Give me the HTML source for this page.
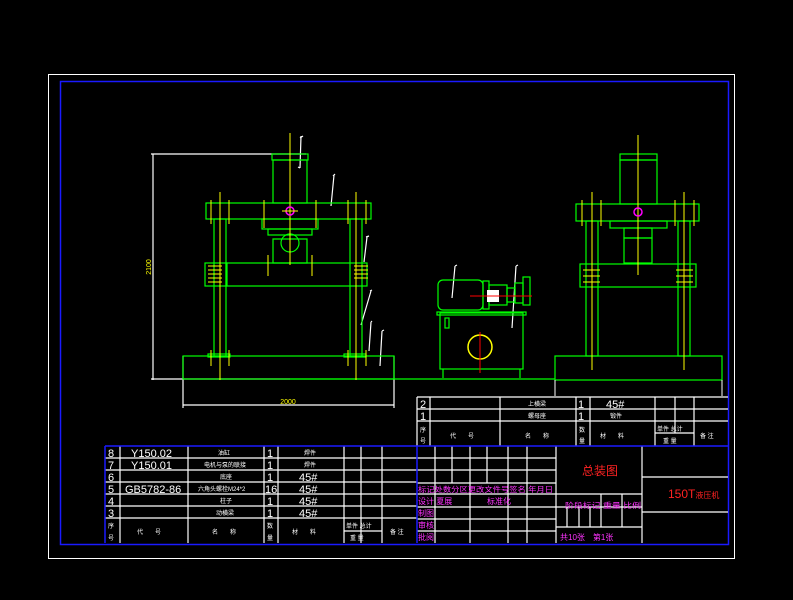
<!DOCTYPE html>
<html><head><meta charset="utf-8"><style>
html,body{margin:0;padding:0;background:#000;width:793px;height:600px;overflow:hidden}
svg{display:block}
text{font-family:"Liberation Sans","Noto Sans CJK SC",sans-serif}
</style></head><body>
<svg width="793" height="600" viewBox="0 0 793 600" xmlns="http://www.w3.org/2000/svg">
<rect x="0" y="0" width="793" height="600" fill="#000"/>
<rect x="48.5" y="74.5" width="686" height="484" fill="none" stroke="#fff"/>
<rect x="60.5" y="81.5" width="668" height="463" fill="none" stroke="#1a1aff" stroke-width="1.5"/>

<!-- LEFT VIEW -->
<g fill="none" stroke="#fff" stroke-width="1.2">
<line x1="153" y1="154" x2="153" y2="380"/>
<line x1="151" y1="154" x2="306" y2="154"/>
<line x1="151" y1="379" x2="290" y2="379"/>
<line x1="183" y1="356" x2="183" y2="408"/>
<line x1="394" y1="356" x2="394" y2="408"/>
<line x1="183" y1="405" x2="394" y2="405"/>
<path d="M300 138 L303 136 M301 136 L300 168 M300 168 L298 167"/>
<path d="M333 176 L335 174 M334 175 L331 206"/>
<path d="M366 237 L369 236 M367 237 L364 262"/>
<path d="M370 291 L372 290 M371 291 L361 325"/>
<path d="M371 322 L372 321 M371 322 L369 351"/>
<path d="M382 331 L384 330 M382 331 L380 366"/>
<path d="M455 266 L457 265 M455 266 L452 298"/>
<path d="M516 266 L518 265 M516 266 L512 328"/>
</g>
<text x="0" y="0" transform="translate(151,267) rotate(-90)" fill="#ff0" font-size="7" text-anchor="middle">2100</text>
<text x="288" y="404" fill="#ff0" font-size="7" text-anchor="middle">2000</text>

<g fill="none" stroke="#00ff00" stroke-width="1.2">
<rect x="272" y="154" width="36" height="6"/>
<rect x="273" y="160" width="34" height="43"/>
<rect x="206" y="203" width="165" height="16"/>
<rect x="262" y="219" width="56" height="10"/>
<rect x="268" y="229" width="44" height="6"/>
<path d="M273 239 h34 v24 h-34 z"/>
<circle cx="290" cy="243" r="9"/>
<rect x="214" y="219" width="12" height="137"/>
<rect x="350" y="219" width="12" height="137"/>
<rect x="226" y="263" width="141" height="23"/>
<rect x="205" y="263" width="22" height="23"/>
<rect x="183" y="356" width="211" height="23"/>
<rect x="208" y="354" width="22" height="3"/>
<rect x="344" y="354" width="22" height="3"/>
<line x1="290" y1="379" x2="555" y2="379"/>
</g>
<g stroke="#ff0" stroke-width="1">
<line x1="290" y1="133" x2="290" y2="265"/>
<line x1="220" y1="192" x2="220" y2="380"/>
<line x1="356" y1="192" x2="356" y2="380"/>
<line x1="211" y1="200" x2="211" y2="224"/>
<line x1="229" y1="200" x2="229" y2="224"/>
<line x1="264" y1="200" x2="264" y2="228"/>
<line x1="316" y1="200" x2="316" y2="228"/>
<line x1="348" y1="200" x2="348" y2="224"/>
<line x1="366" y1="200" x2="366" y2="224"/>
<line x1="268" y1="255" x2="268" y2="276"/>
<line x1="312" y1="255" x2="312" y2="276"/>
<line x1="208" y1="266" x2="222" y2="266"/><line x1="208" y1="270" x2="222" y2="270"/><line x1="208" y1="274" x2="222" y2="274"/><line x1="208" y1="278" x2="222" y2="278"/><line x1="208" y1="282" x2="222" y2="282"/>
<line x1="354" y1="266" x2="368" y2="266"/><line x1="354" y1="270" x2="368" y2="270"/><line x1="354" y1="274" x2="368" y2="274"/><line x1="354" y1="278" x2="368" y2="278"/>
<line x1="211" y1="350" x2="211" y2="366"/><line x1="229" y1="350" x2="229" y2="366"/>
<line x1="348" y1="350" x2="348" y2="366"/><line x1="366" y1="350" x2="366" y2="366"/>
</g>
<circle cx="290" cy="211" r="4" fill="none" stroke="#f0f" stroke-width="1.5"/>
<line x1="282" y1="211" x2="298" y2="211" stroke="#ff0"/>

<!-- MIDDLE: pump unit -->
<g fill="none" stroke="#00ff00" stroke-width="1.2">
<rect x="438" y="280" width="45" height="30" rx="5"/>
<rect x="483" y="281" width="6" height="28"/>
<rect x="489" y="285" width="18" height="20"/>
<rect x="507" y="288" width="8" height="14"/>
<rect x="515" y="283" width="8" height="20"/>
<rect x="523" y="277" width="7" height="28"/>
<rect x="440" y="313" width="83" height="56"/>
<rect x="437" y="312" width="89" height="3"/>
<rect x="445" y="318" width="4" height="10"/>
<line x1="443" y1="369" x2="443" y2="378"/><line x1="520" y1="369" x2="520" y2="378"/>
</g>
<rect x="487" y="290" width="12" height="12" fill="#fff"/>
<circle cx="480" cy="347" r="12" fill="none" stroke="#ff0" stroke-width="1.5"/>
<line x1="480" y1="332" x2="480" y2="373" stroke="#f00"/>
<line x1="470" y1="296" x2="532" y2="296" stroke="#f00"/>

<!-- RIGHT VIEW -->
<g fill="none" stroke="#00ff00" stroke-width="1.2">
<rect x="620" y="154" width="37" height="6"/>
<rect x="620" y="160" width="37" height="44"/>
<rect x="576" y="204" width="123" height="17"/>
<rect x="610" y="221" width="57" height="7"/>
<rect x="624" y="228" width="28" height="10"/>
<rect x="624" y="238" width="28" height="25"/>
<rect x="586" y="221" width="12" height="135"/>
<rect x="678" y="221" width="12" height="135"/>
<rect x="580" y="264" width="116" height="23"/>
<rect x="555" y="356" width="167" height="24"/>
</g>
<g stroke="#ff0" stroke-width="1">
<line x1="638" y1="135" x2="638" y2="275"/>
<line x1="592" y1="192" x2="592" y2="370"/>
<line x1="684" y1="192" x2="684" y2="370"/>
<line x1="582" y1="200" x2="582" y2="226"/><line x1="601" y1="200" x2="601" y2="226"/>
<line x1="675" y1="200" x2="675" y2="226"/><line x1="694" y1="200" x2="694" y2="226"/>
<line x1="583" y1="270" x2="600" y2="270"/><line x1="583" y1="276" x2="600" y2="276"/><line x1="583" y1="282" x2="600" y2="282"/>
<line x1="676" y1="270" x2="693" y2="270"/><line x1="676" y1="276" x2="693" y2="276"/><line x1="676" y1="282" x2="693" y2="282"/>
</g>
<circle cx="638" cy="212" r="4" fill="none" stroke="#f0f" stroke-width="1.5"/>
<g stroke="#fff"><line x1="555" y1="380" x2="555" y2="396"/><line x1="722" y1="380" x2="722" y2="396"/></g>

<!-- TABLES -->
<g fill="none" stroke="#fff" stroke-width="1.2">
<line x1="417" y1="397" x2="728" y2="397"/>
<line x1="417" y1="409" x2="728" y2="409"/>
<line x1="417" y1="421" x2="728" y2="421"/>
<line x1="655" y1="433" x2="694" y2="433"/>
<line x1="417" y1="397" x2="417" y2="446"/>
<line x1="430" y1="397" x2="430" y2="446"/>
<line x1="500" y1="397" x2="500" y2="446"/>
<line x1="576" y1="397" x2="576" y2="446"/>
<line x1="590" y1="397" x2="590" y2="446"/>
<line x1="655" y1="397" x2="655" y2="446"/>
<line x1="675" y1="397" x2="675" y2="433"/>
<line x1="694" y1="397" x2="694" y2="446"/>
<line x1="105" y1="458" x2="417" y2="458"/>
<line x1="105" y1="470" x2="417" y2="470"/>
<line x1="105" y1="482" x2="417" y2="482"/>
<line x1="105" y1="494" x2="417" y2="494"/>
<line x1="105" y1="506" x2="417" y2="506"/>
<line x1="105" y1="518" x2="417" y2="518"/>
<line x1="344" y1="531" x2="382" y2="531"/>
<line x1="120" y1="446" x2="120" y2="543"/>
<line x1="188" y1="446" x2="188" y2="543"/>
<line x1="264" y1="446" x2="264" y2="543"/>
<line x1="278" y1="446" x2="278" y2="543"/>
<line x1="344" y1="446" x2="344" y2="543"/>
<line x1="361" y1="446" x2="361" y2="543"/>
<line x1="382" y1="446" x2="382" y2="543"/>
<line x1="417" y1="458" x2="556" y2="458"/>
<line x1="417" y1="470" x2="556" y2="470"/>
<line x1="417" y1="483" x2="556" y2="483"/>
<line x1="417" y1="494" x2="642" y2="494"/>
<line x1="417" y1="507" x2="556" y2="507"/>
<line x1="417" y1="519" x2="556" y2="519"/>
<line x1="417" y1="531" x2="556" y2="531"/>
<line x1="435" y1="446" x2="435" y2="543"/>
<line x1="452" y1="446" x2="452" y2="483"/>
<line x1="470" y1="446" x2="470" y2="543"/>
<line x1="487" y1="446" x2="487" y2="483"/>
<line x1="508" y1="446" x2="508" y2="543"/>
<line x1="527" y1="446" x2="527" y2="543"/>
<line x1="556" y1="446" x2="556" y2="543"/>
<line x1="642" y1="446" x2="642" y2="543"/>
<line x1="642" y1="477" x2="728" y2="477"/>
<line x1="642" y1="512" x2="728" y2="512"/>
<line x1="601" y1="494" x2="601" y2="527"/>
<line x1="622" y1="494" x2="622" y2="527"/>
<line x1="556" y1="507" x2="642" y2="507"/>
<line x1="556" y1="527" x2="642" y2="527"/>
<line x1="567" y1="507" x2="567" y2="527"/>
<line x1="579" y1="507" x2="579" y2="527"/>
<line x1="590" y1="507" x2="590" y2="527"/>
</g>
<g fill="none" stroke="#1a1aff" stroke-width="1.5">
<line x1="105" y1="446" x2="728" y2="446"/>
<line x1="105" y1="446" x2="105" y2="543"/>
<line x1="417" y1="446" x2="417" y2="543"/>
</g>

<g fill="#fff" font-size="11">
<text x="420" y="408">2</text><text x="420" y="420">1</text>
<text x="578" y="408">1</text><text x="578" y="420">1</text>
<text x="606" y="408">45#</text>
<text x="528" y="406" font-size="6">上横梁</text>
<text x="528" y="418" font-size="6">螺母座</text>
<text x="610" y="418" font-size="6">锻件</text>
<text x="420" y="432" font-size="6">序</text><text x="420" y="443" font-size="6">号</text>
<text x="450" y="438" font-size="6">代　　号</text>
<text x="525" y="438" font-size="6">名　　称</text>
<text x="579" y="432" font-size="6">数</text><text x="579" y="443" font-size="6">量</text>
<text x="600" y="438" font-size="6">材　　料</text>
<text x="657" y="431" font-size="6">单件 总计</text>
<text x="663" y="443" font-size="6">重 量</text>
<text x="700" y="438" font-size="6">备 注</text>

<text x="108" y="457">8</text><text x="108" y="469">7</text><text x="108" y="481">6</text>
<text x="108" y="493">5</text><text x="108" y="505">4</text><text x="108" y="517">3</text>
<text x="131" y="457">Y150.02</text><text x="131" y="469">Y150.01</text>
<text x="125" y="493">GB5782-86</text>
<text x="267" y="457">1</text><text x="267" y="469">1</text><text x="267" y="481">1</text>
<text x="265" y="493">16</text><text x="267" y="505">1</text><text x="267" y="517">1</text>
<text x="299" y="481">45#</text><text x="299" y="493">45#</text><text x="299" y="505">45#</text><text x="299" y="517">45#</text>
<text x="304" y="455" font-size="6">焊件</text><text x="304" y="467" font-size="6">焊件</text>
<text x="218" y="455" font-size="6">油缸</text>
<text x="204" y="467" font-size="6">电机与泵的联接</text>
<text x="220" y="479" font-size="6">底座</text>
<text x="198" y="491" font-size="6">六角头螺栓M24*2</text>
<text x="220" y="503" font-size="6">柱子</text>
<text x="216" y="515" font-size="6">动横梁</text>
<text x="108" y="528" font-size="6">序</text><text x="108" y="540" font-size="6">号</text>
<text x="137" y="534" font-size="6">代　　号</text>
<text x="212" y="534" font-size="6">名　　称</text>
<text x="267" y="528" font-size="6">数</text><text x="267" y="540" font-size="6">量</text>
<text x="292" y="534" font-size="6">材　　料</text>
<text x="346" y="528" font-size="6">单件 总计</text>
<text x="350" y="540" font-size="6">重 量</text>
<text x="390" y="534" font-size="6">备 注</text>
</g>
<g fill="#ff33ff" font-size="8">
<text x="418" y="492" font-size="7.2" textLength="135" lengthAdjust="spacingAndGlyphs">标记处数分区更改文件号签名 年月日</text>
<text x="418" y="504">设计 夏展</text>
<text x="487" y="504">标准化</text>
<text x="418" y="516">制图</text>
<text x="418" y="528">审核</text>
<text x="418" y="540">批阅</text>
<text x="565" y="508" font-size="7.5" textLength="76" lengthAdjust="spacingAndGlyphs">阶段标记 重量 比例</text>
<text x="560" y="540">共10张　第1张</text>
</g>
<text x="582" y="475" fill="#ff2222" font-size="12">总装图</text>
<text x="668" y="498" fill="#ff2222" font-size="12">150T<tspan font-size="8">液压机</tspan></text>
</svg>
</body></html>
